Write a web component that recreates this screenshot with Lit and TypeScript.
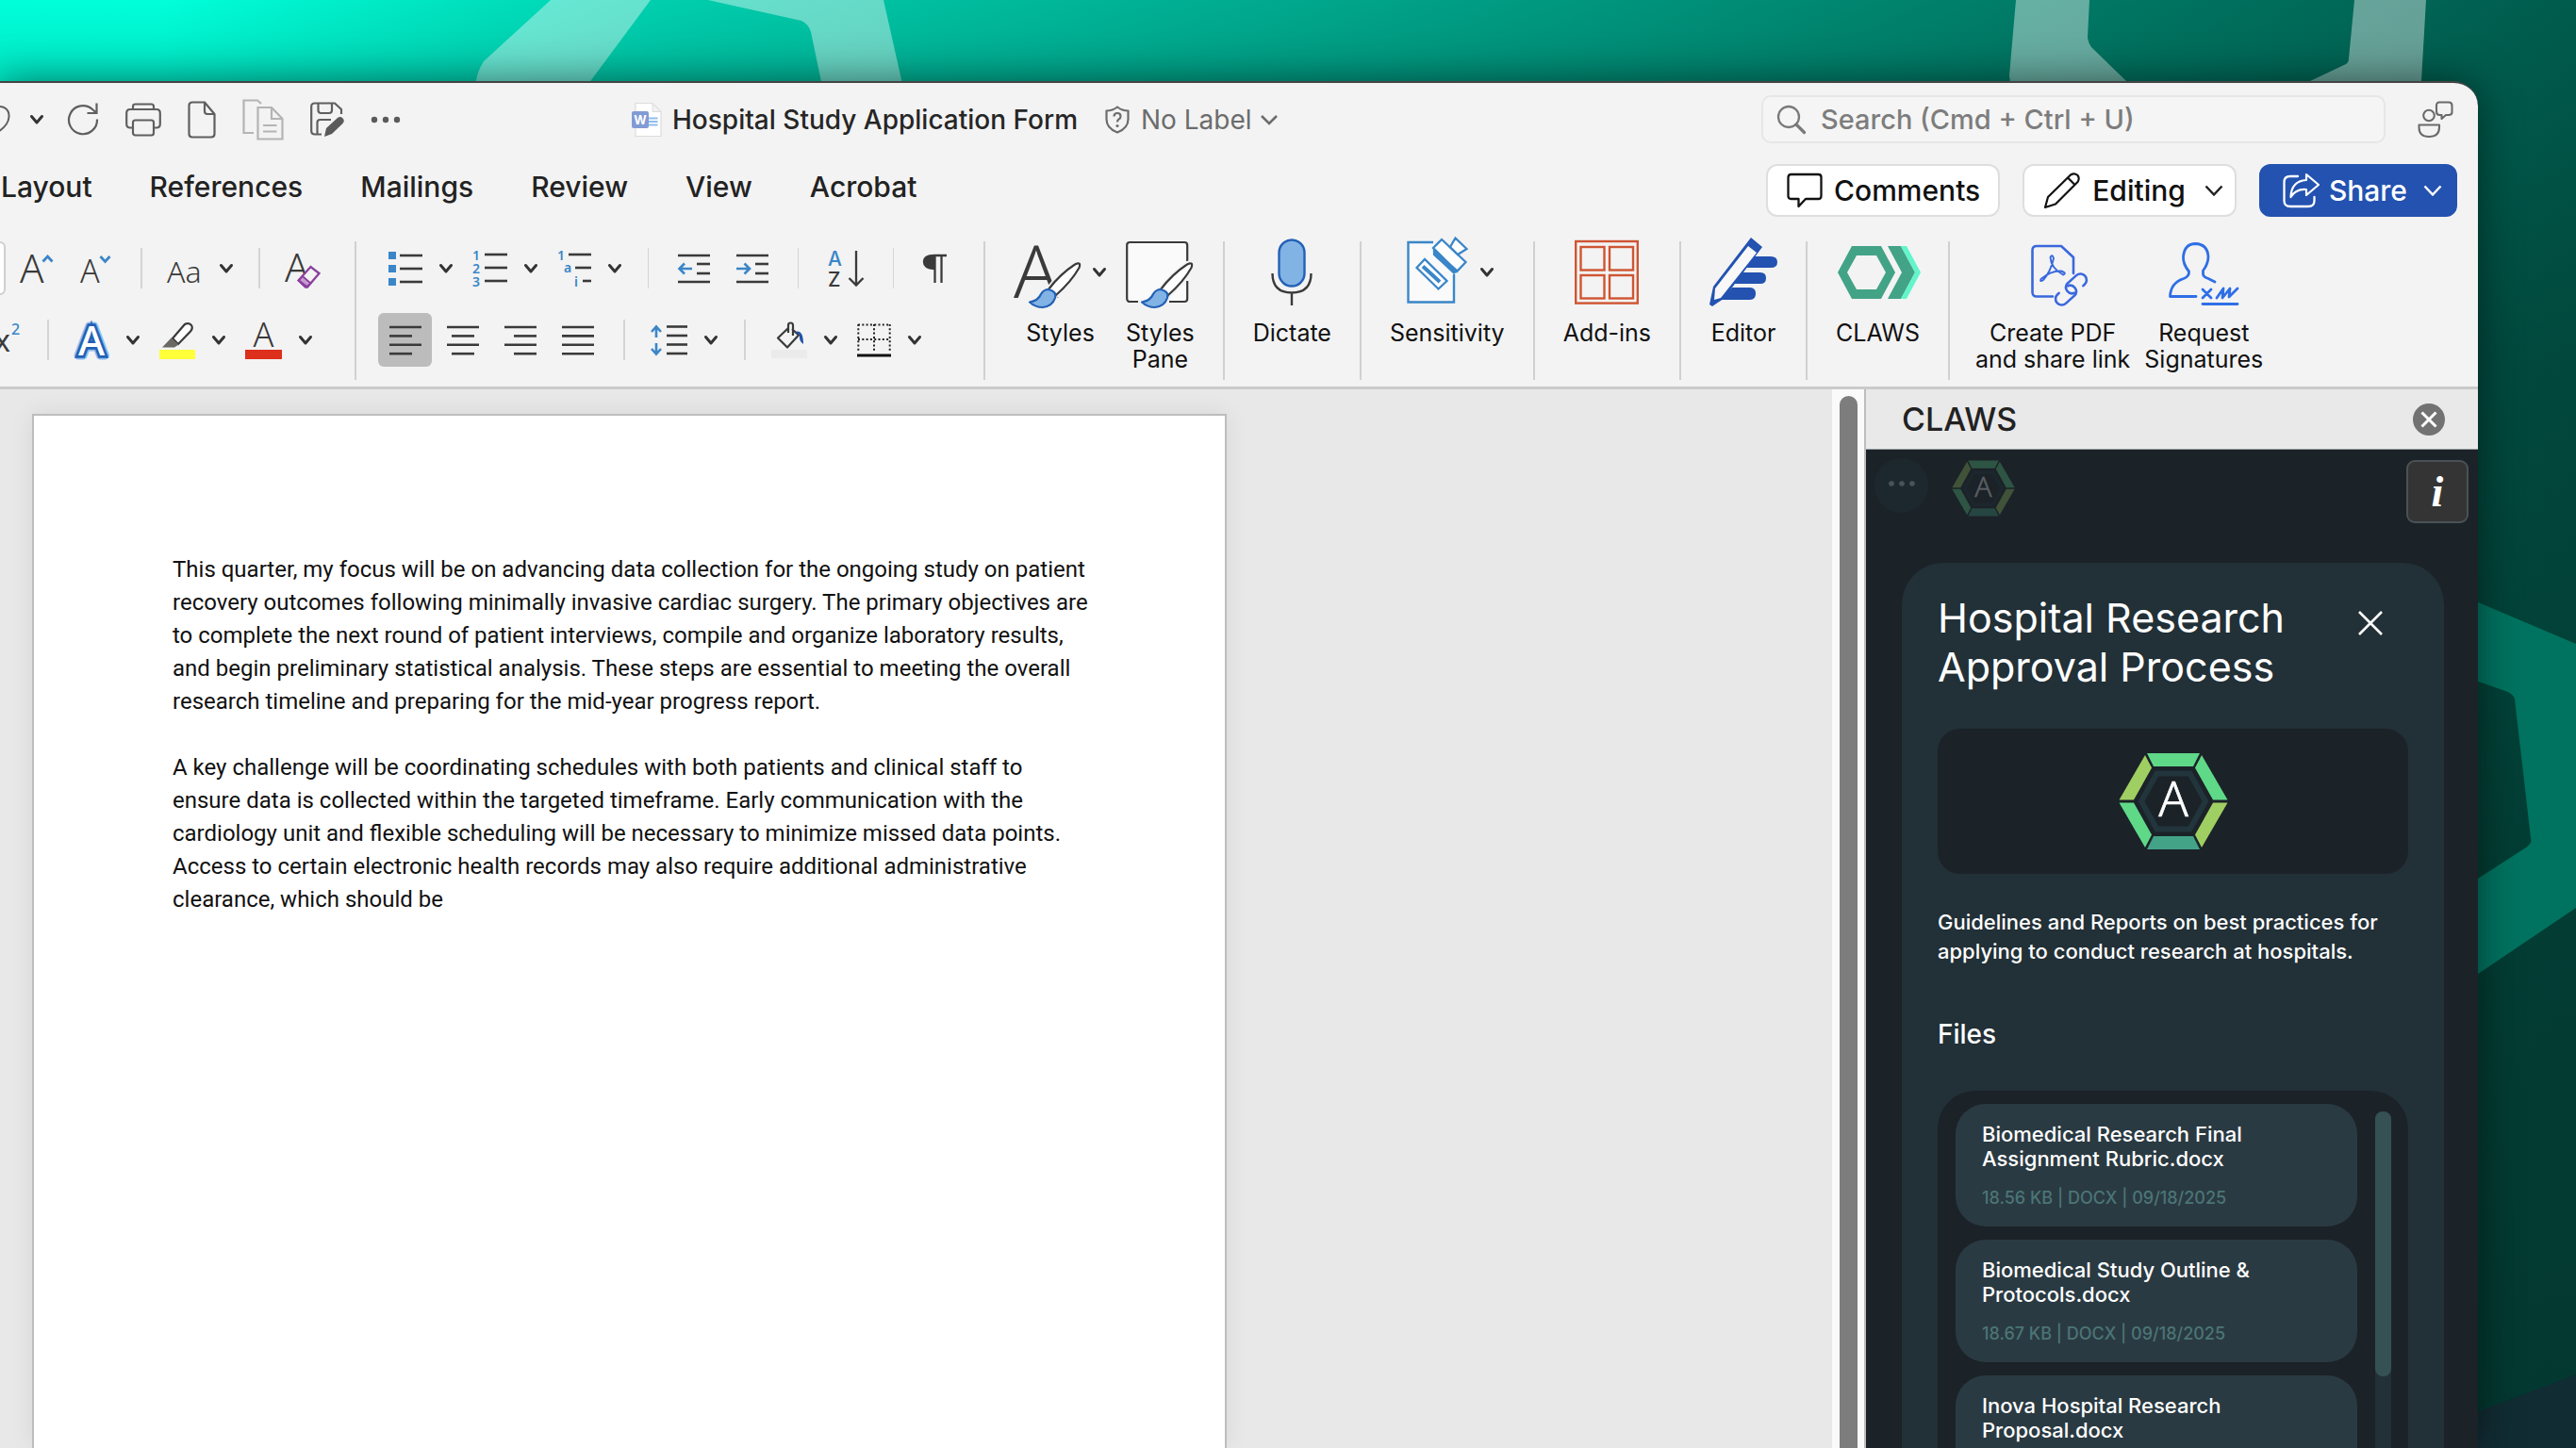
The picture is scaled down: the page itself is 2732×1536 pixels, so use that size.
import { LitElement, html, css, svg } from "lit";
import { customElement, property } from "lit/decorators.js";

const INK = "#3a3a3a";
const BLUE = "#3a86c8";
const DEEP = "#2352b0";

const pic = (w: number, h: number, body: unknown) => html`<svg
  class="pic"
  width=${w}
  height=${h}
  viewBox="0 0 ${w} ${h}"
  fill="none"
  aria-hidden="true"
>${body}</svg>`;

const chevron = (color = "#333", sw = 3) =>
  pic(16, 12, svg`<path d="M2.5 2.5 8 9l5.500-6.500" stroke=${color} stroke-width=${sw} stroke-linecap="round" stroke-linejoin="round"/>`);

const rule = (x1: number, x2: number, y: number) =>
  svg`<path d="M${x1} ${y}H${x2}" stroke=${INK} stroke-width="2.600"/>`;

/* Title bar */
const undo = pic(11, 40, svg`<path d="M-6 7C4 4 10 9 9.500 17C9 24 4 29-2 33" stroke="#5f5f5f" stroke-width="2"/>`);
const redo = pic(34, 38, svg`<path d="M32 18.500A15 15 0 1 1 27 8L31 11.500M31.500 1.500V12H21.500" stroke="#5f5f5f" stroke-width="2.200"/>`);
const printer = pic(38, 36, svg`<g stroke="#5f5f5f" stroke-width="2.200">
  <path d="M8 7V4Q8 1.500 10.500 1.500H27.500Q30 1.500 30 4V7"/>
  <path d="M8 26.500H5Q1.200 26.500 1.200 22.500V11Q1.200 7 5 7H33Q36.800 7 36.800 11V22.500Q36.800 26.500 33 26.500H30"/>
  <rect x="8" y="18.500" width="22" height="16" rx="2.500"/></g>`);
const newDoc = pic(30, 40, svg`<path d="M18 1.500H5Q1.500 1.500 1.500 5V35Q1.500 38.500 5 38.500H25Q28.500 38.500 28.500 35V14L18 1.500V11Q18 14 21 14H28.500" stroke="#5f5f5f" stroke-width="2.200" stroke-linejoin="round"/>`);
const copyDoc = pic(44, 44, svg`<path d="M12 36H1.500V1.500H16L20 5M16.500 9H31L42.500 21V42.500H16.500ZM31 9V21H42.500M22 28H36.500M22 34.500H36.500" stroke="#b4b4b4" stroke-width="2.200"/>`);
const saveEdit = pic(36, 38, svg`<g stroke="#5f5f5f" stroke-width="2.200" stroke-linejoin="round">
  <path d="M12 34.500H5Q1.200 34.500 1.200 31V5Q1.200 1.500 5 1.500H26L33 8V13"/>
  <path d="M8.500 1.500V9Q8.500 12 11.500 12H20Q23 12 23 9V1.500M7.500 34V22Q7.500 19 10.500 19H22"/></g>
  <path d="M15 37 17 28 29 17Q32 15 34.500 17.500Q37 20 34.500 23L23 34Z" fill="#5a5a5a"/>`);
const dots = pic(32, 10, svg`<g fill="#5a5a5a"><circle cx="4" cy="5" r="3.200"/><circle cx="16" cy="5" r="3.200"/><circle cx="28" cy="5" r="3.200"/></g>`);
const wordFile = pic(34, 40, svg`<path d="M5 2.500H23L32 11.500V37.500H5Z" fill="#fff" stroke="#dcdcdc" stroke-width="1.200"/>
  <path d="M23 2.500V11.500H32Z" fill="#f1f1f1" stroke="#dcdcdc"/>
  <path d="M19 18.500H28.500M19 22H28.500M19 25.500H28.500" stroke="#8fbdf0" stroke-width="1.800"/>
  <rect x="1" y="11" width="18" height="18" rx="2" fill="#819bd4"/>
  <text x="10" y="25" text-anchor="middle" font-family="Inter, sans-serif" font-size="13" font-weight="700" fill="#fff">W</text>`);
const shield = pic(26, 30, svg`<path d="M13 1.500Q18 5.500 24.500 5.500V14.500Q24.500 24 13 28.500Q1.500 24 1.500 14.500V5.500Q8 5.500 13 1.500Z" stroke="#6c6c6c" stroke-width="2.200" stroke-linejoin="round"/>
  <path d="M9.500 11.500Q9.500 8 13 8Q16.500 8 16.500 11.200Q16.500 13.500 14.500 14.500Q13 15.500 13 17.500" stroke="#6c6c6c" stroke-width="2.200"/><circle cx="13" cy="21.500" r="1.600" fill="#6c6c6c"/>`);
const magnifier = pic(32, 32, svg`<circle cx="13" cy="13" r="11" stroke="#7a7a7a" stroke-width="2.300"/><path d="M21 21 29.500 29.500" stroke="#7a7a7a" stroke-width="3.200" stroke-linecap="round"/>`);
const personChat = pic(38, 40, svg`<g stroke="#6a6a6a" stroke-width="2.100" stroke-linejoin="round">
  <circle cx="12" cy="15.500" r="5.800"/>
  <path d="M1.500 25.500H23V28Q23 38 12 38Q1.500 38 1.500 28Z"/>
  <path d="M23 1.500H33Q36.500 1.500 36.500 5V12Q36.500 15 33 15H30L25.500 19V15H23.500Q20 15 20 11.500V5Q20 1.500 23 1.500Z"/></g>`);

/* Action buttons */
const bubble = pic(38, 38, svg`<path d="M4.500 2H33.500Q36.500 2 36.500 5V25Q36.500 28 33.500 28H20L12.500 36V28H4.500Q1.500 28 1.500 25V5Q1.500 2 4.500 2Z" stroke="#111" stroke-width="2.300" stroke-linejoin="round"/>`);
const pencil = pic(40, 40, svg`<path d="M2 38 5 27 29 3.500Q33 1 36.500 4Q39 7.500 36.500 11L13 34.500ZM26 6.500 33.500 14" stroke="#111" stroke-width="2.200" stroke-linejoin="round"/>`);
const shareOut = pic(40, 38, svg`<path d="M16 4H8Q1.500 4 1.500 10V30Q1.500 36 8 36H27Q33.500 36 33.500 30V26" stroke="#fff" stroke-width="2.300" stroke-linecap="round"/>
  <path d="M25 2 38 13 25 24V18Q14 17 8.500 26Q9 9 25 8Z" stroke="#fff" stroke-width="2.200" stroke-linejoin="round"/>`);

/* Font group */
const glyphA = (x: number, y: number, size: number, weight = 400) =>
  svg`<text x=${x} y=${y} font-family="Noto Sans, sans-serif" font-size=${size} font-weight=${weight} fill="#3a3a3a">A</text>`;
const growFont = pic(36, 38, svg`${glyphA(0, 34, 42, 300)}<path d="M24.500 11.500 29.500 6 34.500 11.500" stroke=${BLUE} stroke-width="2.800"/>`);
const shrinkFont = pic(34, 38, svg`${glyphA(0, 34, 34, 300)}<path d="M21.500 6 26.500 11.500 31.500 6" stroke=${BLUE} stroke-width="2.800"/>`);
const changeCase = pic(38, 38, svg`<text x="0" y="34" font-family="Noto Sans, sans-serif" font-size="32" font-weight="300" fill="#3a3a3a">Aa</text>`);
const clearFormat = pic(38, 42, svg`${glyphA(0, 35, 42, 300)}<path d="M14.500 33.500 27.500 19 36.500 26 24 40.500H22Z" fill="#f3f3f3" stroke="#8a3f9c" stroke-width="2.300"/><path d="M15 33.500 19 29 27.500 36.500 23.500 40Z" fill="#c79bd0" stroke="#8a3f9c" stroke-width="1.800"/>`);
const superscript = pic(24, 42, svg`<text x="-6" y="33" font-family="Noto Sans, sans-serif" font-size="32" fill="#3a3a3a">x</text><text x="12" y="15" font-family="Noto Sans, sans-serif" font-size="16" font-weight="500" fill=${BLUE}>2</text>`);
const textEffects = pic(38, 38, svg`<text x="19" y="34.500" text-anchor="middle" font-family="Noto Sans, sans-serif" font-size="43" font-weight="500" fill="#fff" stroke="#8fbdf0" stroke-width="9" paint-order="stroke" stroke-linejoin="round">A</text><text x="19" y="34.500" text-anchor="middle" font-family="Noto Sans, sans-serif" font-size="43" font-weight="500" fill="#fff" stroke="#2361b5" stroke-width="5.500" paint-order="stroke">A</text>`);
const highlight = pic(38, 40, svg`<rect x="0" y="30" width="38" height="10" fill="#ffff3a"/><path d="M14 18 27 3Q31 1 34 4Q36 7 33 10.500L20 24Z" fill="#fff" stroke=${INK} stroke-width="2.200"/><path d="M12.500 17.500 20.500 24.500 16 27.500H3Z" fill="#6b6762"/>`);
const fontColor = pic(39, 40, svg`<rect x="0" y="30" width="39" height="10" fill="#dc2f1c"/><text x="19.500" y="27" text-anchor="middle" font-family="Noto Sans, sans-serif" font-size="36" font-weight="300" fill="#3a3a3a">A</text>`);

/* Paragraph group */
const bullets = pic(36, 38, svg`<g fill=${BLUE}><rect width="8" height="8" y="1"/><rect width="8" height="8" y="15"/><rect width="8" height="8" y="29"/></g>${rule(12, 36, 5)}${rule(12, 36, 19)}${rule(12, 36, 33)}`);
const mark = (x: number, y: number, t: string) => svg`<text x=${x} y=${y} font-family="Noto Sans, sans-serif" font-size="14" font-weight="600" fill=${BLUE}>${t}</text>`;
const numbers = pic(37, 40, svg`${mark(0, 11, "1")}${mark(0, 25, "2")}${mark(0, 39, "3")}${rule(13, 37, 5)}${rule(13, 37, 19)}${rule(13, 37, 33)}`);
const multilevel = pic(36, 40, svg`${mark(0, 11, "1")}${mark(7, 24, "a")}${mark(18, 39, "i")}${rule(12, 36, 5)}${rule(19, 36, 19)}${rule(27, 36, 33)}`);
const outdent = pic(34, 32, svg`${rule(0, 34, 2)}${rule(20, 34, 11)}${rule(20, 34, 21)}${rule(0, 34, 30)}<path d="M15 16H2M7 10.500 1.500 16 7 21.500" stroke=${BLUE} stroke-width="2.600"/>`);
const indent = pic(34, 32, svg`${rule(0, 34, 2)}${rule(20, 34, 11)}${rule(20, 34, 21)}${rule(0, 34, 30)}<path d="M0 16H13.500M8.500 10.500 14 16 8.500 21.500" stroke=${BLUE} stroke-width="2.600"/>`);
const sortAz = pic(38, 42, svg`<text x="0" y="18" font-family="Inter, sans-serif" font-size="21" font-weight="500" fill=${BLUE}>A</text><text x="0" y="40" font-family="Inter, sans-serif" font-size="21" font-weight="500" fill="#3a3a3a">Z</text><path d="M30 2V38M22.500 31 30 38.500 37.500 31" stroke=${INK} stroke-width="2.300"/>`);
const pilcrow = pic(26, 32, svg`<path d="M12 16Q1 15.500 1 9Q1 2 12 2H25M12.500 2V31M19.500 2V31" stroke=${INK} stroke-width="2.300"/><path d="M12 2Q1 2 1 9.500Q1 16.500 12 16.500Z" fill=${INK}/>`);
const lines = (rows: number[][]) => pic(34, 32, svg`${rows.map((r, i) => rule(r[0], r[1], 2 + i * 9.4))}`);
const alignLeft = lines([[0, 34], [0, 24], [0, 34], [0, 24]]);
const alignCenter = lines([[0, 34], [5, 29], [0, 34], [5, 29]]);
const alignRight = lines([[0, 34], [10, 34], [0, 34], [10, 34]]);
const justify = lines([[0, 34], [0, 34], [0, 34], [0, 34]]);
const lineSpacing = pic(39, 34, svg`${rule(17, 39, 2.5)}${rule(17, 39, 12)}${rule(17, 39, 21.5)}${rule(17, 39, 31)}<path d="M6 14V2.500M1 8 6 2.500 11 8M6 20V31.500M1 26 6 31.500 11 26" stroke=${BLUE} stroke-width="2.600"/>`);
const shading = pic(38, 40, svg`<rect y="30" width="38" height="9" fill="#ebebeb"/><path d="M18 7 7 17.500 17 27.500 29 14.500 22 8M18 12V4Q18 1.500 20.500 1.500Q23 1.500 23 4V15" stroke=${INK} stroke-width="2.200" stroke-linejoin="round"/><path d="M25 11Q34 8 34 24Q29 21 30 14Z" fill=${DEEP}/>`);
const borders = pic(36, 36, svg`<path d="M1.300 1V31M34.700 1V31M18 1V31M1 1.500H35M1 17H35" stroke="#222" stroke-width="2" stroke-dasharray="2 2.300"/><path d="M0 34H36" stroke="#111" stroke-width="3"/>`);

/* Large ribbon buttons */
const brush = svg`<g transform="translate(21 0)">
  <path d="M16 54Q28 38 44 27.500Q51 24 48.500 31Q40 46 24 60Z" fill="none" stroke="#f3f3f3" stroke-width="6"/>
  <path d="M16 54Q28 38 44 27.500Q51 24 48.500 31Q40 46 24 60Z" fill="#fff" stroke=${INK} stroke-width="2.200"/>
  <path d="M-4 67.500Q5 66 8 59Q11 54 16 54Q25 56 23 63Q20 72 10 73Q2 73-4 67.500Z" fill="#82b3e5" stroke="#2361b5" stroke-width="2.200" stroke-linejoin="round"/></g>`;
const styles = pic(72, 72, svg`<text x="0" y="63" font-family="Noto Sans, sans-serif" font-size="78" font-weight="300" fill="#3a3a3a">A</text>${brush}`);
const stylesPane = pic(72, 72, svg`<rect x="1.200" y="4" width="64" height="63" rx="3" fill="#fafafa" stroke=${INK} stroke-width="2.200"/><path d="M13 67H46M65.200 24V45" stroke="#f3f3f3" stroke-width="5"/>${brush}`);
const mic = pic(44, 72, svg`<rect x="8.500" y="1.500" width="27" height="49" rx="13.500" fill="#82b3e5" stroke="#2361b5" stroke-width="2.400"/><path d="M1.500 37Q1.500 57.500 22 57.500Q42.500 57.500 42.500 37M22 57.500V71" stroke=${INK} stroke-width="2.400"/>`);
const sensitivity = pic(74, 72, svg`<g transform="translate(8 0)"><path d="M28 4H1.500V67.500H50V38" fill="#fafafa" stroke=${BLUE} stroke-width="2.400"/>
  <g stroke=${BLUE} stroke-width="2.300">
    <path d="M10.500 31 19 22 42.500 45 33.500 53.500Z" fill="#fff"/><path d="M17 29.500 35 46" stroke-width="4"/>
    <path d="M28 10 37 1 62.500 25 53 35Z" fill="#fff"/><path d="M29 13 53 34 50 36.500 29 17Z" fill=${BLUE}/>
    <path d="M46 9 51.500-.500 63.500 11 54 17Z" fill="#fff"/></g></g>`);
const addins = pic(68, 70, svg`<g stroke="#cf5532" stroke-width="2.400"><rect x="1.200" y="2" width="65.600" height="65.600"/><rect x="6.500" y="8" width="25" height="24.500"/><rect x="37" y="8" width="25" height="24.500"/><rect x="6.500" y="38" width="25" height="24.500"/><rect x="37" y="38" width="25" height="24.500"/></g>`);
const editor = pic(72, 74, svg`<g fill=${DEEP}><path d="M40 20H65Q72 20 72 26T65 32H34Z"/><path d="M33 37H54Q60 37 60 43T54 49H26Z"/><path d="M24 53H43Q49 53 49 59.500T43 66H12Z"/><path d="M0 71 4 52 44 0 56 10 15 65Q10 68 3 73Z"/></g><path d="M41 9 50 16 12 64 5 66 6 54Z" fill="#f8f8f8"/>`);
const claws = pic(88, 60, svg`<path d="M16 2H47L62 30 47 58H16L1 30ZM21 12 11 30 21 48H42L52 30 42 12Z" fill="#43a386" fill-rule="evenodd"/><path d="M54 2H68L83 30 68 58H54L69 30Z" fill="#43a386"/><path d="M68 2H74L89 30 74 58H68L83 30Z" fill="#62f5cb"/>`);
const createPdf = pic(48, 68, svg`<g stroke="#3a68dd" stroke-width="2.600" stroke-linecap="round">
  <path d="M24 59.500H7Q2.500 59.500 2.500 55V10.500Q2.500 6 7 6H33L46 18V35" stroke-linejoin="round"/>
  <path d="M11.500 41Q10 44.500 14 42Q22 33 25 19Q23.500 14 21.500 18Q22 29 35 36.500Q39.500 35 33 32.500Q22 32 11.500 41Z" stroke-width="1.900"/>
  <path transform="translate(49 46) rotate(-42)" d="M4 6.500H6A6.500 6.500 0 0 0 6-6.500H-7A6.500 6.500 0 0 0-8 6"/>
  <path transform="translate(38 58) rotate(-42)" d="M-4-6.500H-6A6.500 6.500 0 0 0-6 6.500H7A6.500 6.500 0 0 0 8-6"/></g>`);
const signatures = pic(74, 70, svg`<g stroke="#2f6fe6" stroke-width="2.800" stroke-linecap="round" stroke-linejoin="round">
  <path d="M29 60.500H1.500Q2 46 16 41.500Q22 39 21.500 34Q15 26 15.500 18Q17 4.500 28.500 4.500Q41 5 42 18Q42 26 36.500 33V37Q37 40 42 41.500L49 45"/>
  <path d="M36 53 45 62M45 53 36 62M51 62 58 52 57 62 65 52 64 61 73 52M36 68.500H73"/></g>`);

/* Assistant badge: six coloured bars around the letter A */
const badge = (w: number, h: number) => html`<svg class="pic" width=${w} height=${h} viewBox="0 0 116 104" aria-hidden="true">
  <path d="M30 1H86L79 15H37Z" fill="#5fd988"/>
  <path d="M88 3 115.500 50.500H100L81 16.500Z" fill="#5fd988"/>
  <path d="M115.500 53.500 88 101 81 87.500 100 53.500Z" fill="#9fcf62"/>
  <path d="M86 103H30L37 89H79Z" fill="#43a386"/>
  <path d="M28 101 .5 53.500H16L35 87.500Z" fill="#5fd988"/>
  <path d="M.5 50.500 28 3 35 16.500 16 50.500Z" fill="#9fcf62"/>
  <path d="M40.500 22.500H75.500L92 52 75.500 81.500H40.500L24 52Z" fill="none" stroke="#22343c" stroke-width="6"/>
  <text x="58" y="67.500" text-anchor="middle" font-family="Noto Sans, sans-serif" font-size="52" font-weight="300" fill="#fff" stroke="#fff" stroke-width="0.600">A</text>
</svg>`;

const shared = css`
  * { box-sizing: border-box; }
  button { font: inherit; color: inherit; background: none; border: 0; margin: 0; padding: 0; cursor: pointer; }
  .pic { display: block; flex: none; overflow: visible; }
`;

@customElement("title-bar")
class TitleBar extends LitElement {
  static styles = [shared, css`
    :host { display: flex; align-items: center; height: 77px; padding-right: 26px; font-size: 28px; color: #262626; }
    .quick { display: flex; align-items: center; gap: 28px; }
    .quick button, .label { display: flex; align-items: center; }
    .quick .undo { gap: 20px; margin-right: -4px; }
    .name { display: flex; align-items: center; gap: 10px; margin: 0 0 0 244px; font-size: inherit; font-weight: 500; white-space: nowrap; }
    .label { gap: 12px; margin-left: 29px; color: #6c6c6c; white-space: nowrap; }
    .label .text { margin-right: -4px; }
    .search { display: flex; align-items: center; gap: 15px; width: 662px; height: 51px; margin: 0 34px 0 auto; padding: 0 14px; border: 2px solid #e6e6e6; border-radius: 10px; background: #f5f5f5; }
    .search input { flex: 1; min-width: 0; border: 0; outline: 0; background: none; font: inherit; font-size: 29px; font-weight: 500; padding: 0; }
    .search input::placeholder { color: #7d7d7d; opacity: 1; }
  `];
  render() {
    return html`
      <div class="quick">
        <button class="undo" aria-label="Undo">${undo}${chevron()}</button>
        <button aria-label="Redo">${redo}</button>
        <button aria-label="Print">${printer}</button>
        <button aria-label="New document">${newDoc}</button>
        <button aria-label="Copy document">${copyDoc}</button>
        <button aria-label="Save and edit">${saveEdit}</button>
        <button aria-label="More commands">${dots}</button>
      </div>
      <h1 class="name">${wordFile}<span>Hospital Study Application Form</span></h1>
      <button class="label">${shield}<span class="text">No Label</span>${pic(20, 12, svg`<path d="M2 2 10 10 18 2" stroke="#6c6c6c" stroke-width="2.600"/>`)}</button>
      <label class="search">${magnifier}<input type="search" aria-label="Search" placeholder="Search (Cmd + Ctrl + U)" /></label>
      <button aria-label="Presence">${personChat}</button>`;
  }
}

@customElement("tab-row")
class TabRow extends LitElement {
  static styles = [shared, css`
    :host { display: flex; justify-content: space-between; align-items: center; margin-top: 9px; padding-right: 22px; font-size: 30px; }
    nav { display: flex; gap: 61px; padding: 0 0 8px 1px; font-weight: 500; }
    nav a { color: #222; text-decoration: none; }
    .actions { display: flex; gap: 24px; color: #111; font-weight: 500; }
    .actions button { display: flex; align-items: center; gap: 12px; height: 56px; padding: 0 19px 0 20px; border: 2px solid #dedede; border-radius: 12px; background: #fff; }
    .actions .more { padding-right: 12px; }
    .actions .share { gap: 9px; padding: 0 14px 0 23px; border-color: #2352b0; background: #2352b0; color: #fff; }
    .drop { margin-left: 8px; }
  `];
  private drop(color: string) {
    return html`<span class="drop">${pic(20, 14, svg`<path d="M1.500 2.500 10 11.500 18.500 2.500" stroke=${color} stroke-width="2.500"/>`)}</span>`;
  }
  render() {
    return html`
      <nav>${["Layout", "References", "Mailings", "Review", "View", "Acrobat"].map((t) => html`<a href="#">${t}</a>`)}</nav>
      <div class="actions">
        <button>${bubble}Comments</button>
        <button class="more">${pencil}Editing${this.drop("#222")}</button>
        <button class="share">${shareOut}Share${this.drop("#fff")}</button>
      </div>`;
  }
}

@customElement("ribbon-bar")
class RibbonBar extends LitElement {
  static styles = [shared, css`
    :host { display: flex; margin-top: 26px; padding-bottom: 7px; border-bottom: 3px solid #cacaca; font-size: 25px; line-height: 28px; color: #111; }
    .group { display: flex; gap: 20px; padding: 0 30px; border-right: 2px solid #d0d0d0; height: 147px; }
    .small { flex-direction: column; gap: 19px; }
    .font { padding: 0 27px 0 0; width: 378px; }
    .para { padding: 0 34px; width: 667px; }
    .pdf { border: 0; padding: 0 27px; gap: 15px; }
    .row { display: flex; align-items: center; gap: 20px; height: 57px; }
    .row button { display: flex; align-items: center; gap: 17px; }
    .row .plain { padding: 0 4px; }
    .size { width: 6px; height: 57px; margin-right: -9px; border: 2px solid #cfcfcf; border-left: 0; border-radius: 0 8px 8px 0; background: #fff; }
    .sep { width: 2px; height: 43px; margin: 0 6px; background: #d4d4d4; }
    .para .sep { margin: 0 7px; }
    .aligns { display: flex; gap: 4px; margin-left: -11px; margin-right: -7px; }
    .aligns button { justify-content: center; width: 57px; height: 57px; border-radius: 6px; }
    .aligns .on { background: #bcbcbc; }
    .big { display: flex; flex-direction: column; align-items: center; margin-top: -3px; white-space: nowrap; }
    .icon { display: flex; align-items: center; justify-content: center; gap: 11px; height: 72px; margin-bottom: 14px; }
  `];
  private combo(label: string, icon: unknown) {
    return html`<button aria-label=${label}>${icon}${chevron()}</button>`;
  }
  private plain(label: string, icon: unknown) {
    return html`<button class="plain" aria-label=${label}>${icon}</button>`;
  }
  private big(text: string[], icon: unknown, drop = false) {
    return html`<button class="big"><span class="icon">${icon}${drop ? chevron() : ""}</span>${text.map((t) => html`<span>${t}</span>`)}</button>`;
  }
  render() {
    const sep = html`<span class="sep"></span>`;
    return html`
      <div class="group small font">
        <div class="row"><span class="size"></span>${this.plain("Increase font size", growFont)}${this.plain("Decrease font size", shrinkFont)}${sep}${this.combo("Change case", changeCase)}${sep}<button aria-label="Clear formatting">${clearFormat}</button></div>
        <div class="row"><button aria-label="Superscript">${superscript}</button>${sep}${this.combo("Text effects", textEffects)}${this.combo("Highlight", highlight)}${this.combo("Font colour", fontColor)}</div>
      </div>
      <div class="group small para">
        <div class="row">${this.combo("Bullets", bullets)}${this.combo("Numbering", numbers)}${this.combo("Multilevel list", multilevel)}${sep}${this.plain("Decrease indent", outdent)}${this.plain("Increase indent", indent)}${sep}${this.plain("Sort", sortAz)}${sep}${this.plain("Show paragraph marks", pilcrow)}</div>
        <div class="row">
          <div class="aligns"><button class="on" aria-label="Align left">${alignLeft}</button><button aria-label="Centre">${alignCenter}</button><button aria-label="Align right">${alignRight}</button><button aria-label="Justify">${justify}</button></div>
          ${sep}${this.combo("Line spacing", lineSpacing)}${sep}${this.combo("Shading", shading)}${this.combo("Borders", borders)}
        </div>
      </div>
      <div class="group">${this.big(["Styles"], styles, true)}${this.big(["Styles", "Pane"], stylesPane)}</div>
      <div class="group">${this.big(["Dictate"], mic)}</div>
      <div class="group">${this.big(["Sensitivity"], sensitivity, true)}</div>
      <div class="group">${this.big(["Add-ins"], addins)}</div>
      <div class="group">${this.big(["Editor"], editor)}</div>
      <div class="group">${this.big(["CLAWS"], claws)}</div>
      <div class="group pdf">${this.big(["Create PDF", "and share link"], createPdf)}${this.big(["Request", "Signatures"], signatures)}</div>`;
  }
}

@customElement("document-page")
class DocumentPage extends LitElement {
  static styles = [shared, css`
    :host { display: flex; flex: 1; min-width: 0; background: #e8e8e8; overflow: hidden; }
    .canvas { flex: 1; padding: 26px 0 0 34px; }
    .page { width: 1267px; height: 100%; padding: 146px 120px 0 147px; background: #fff; border: 2px solid #bdbdbd; border-bottom: 0; box-shadow: 0 0 24px rgba(0, 0, 0, 0.08); font-family: Roboto, sans-serif; font-size: 24px; line-height: 35px; color: #111; }
    p { margin: 0 0 35px; white-space: nowrap; }
    p span { display: block; }
    .gutter { width: 34px; padding: 7px 7px 0 8px; background: #fafafa; }
    .thumb { height: 100%; border-radius: 10px 10px 0 0; background: #7d7d7d; }
  `];
  private paragraphs = [
    [
      "This quarter, my focus will be on advancing data collection for the ongoing study on patient",
      "recovery outcomes following minimally invasive cardiac surgery. The primary objectives are",
      "to complete the next round of patient interviews, compile and organize laboratory results,",
      "and begin preliminary statistical analysis. These steps are essential to meeting the overall",
      "research timeline and preparing for the mid-year progress report.",
    ],
    [
      "A key challenge will be coordinating schedules with both patients and clinical staff to",
      "ensure data is collected within the targeted timeframe. Early communication with the",
      "cardiology unit and flexible scheduling will be necessary to minimize missed data points.",
      "Access to certain electronic health records may also require additional administrative",
      "clearance, which should be",
    ],
  ];
  render() {
    return html`
      <div class="canvas"><article class="page">${this.paragraphs.map((p) => html`<p>${p.map((l) => html`<span>${l} </span>`)}</p>`)}</article></div>
      <div class="gutter"><div class="thumb"></div></div>`;
  }
}

@customElement("file-card")
class FileCard extends LitElement {
  @property({ attribute: false }) lines: string[] = [];
  @property() meta = "";
  static styles = [shared, css`
    :host { display: block; }
    button { display: flex; flex-direction: column; width: 100%; height: 130px; padding: 19px 28px 0; border-radius: 32px; background: #2a3a42; text-align: left; color: #fff; font-size: 22px; line-height: 26px; font-weight: 500; white-space: nowrap; }
    .meta { margin-top: 17px; color: #4b7576; font-size: 18px; line-height: 24px; }
  `];
  render() {
    return html`<button>${this.lines.map((t) => html`<span>${t}</span>`)}<span class="meta">${this.meta}</span></button>`;
  }
}

@customElement("claws-pane")
class ClawsPane extends LitElement {
  static styles = [shared, css`
    :host { display: flex; flex-direction: column; width: 651px; border-left: 2px solid #bdbdbd; background: #1b2228; color: #fff; overflow: hidden; }
    header { display: flex; flex: none; align-items: center; justify-content: space-between; height: 64px; padding: 0 35px 0 38px; background: #e9e9e9; border-bottom: 1px solid #9ba1a3; color: #222; }
    h2 { margin: 0; font-size: 34px; font-weight: 500; line-height: 40px; }
    .tools { display: flex; flex: none; align-items: flex-start; height: 120px; padding: 9px 10px 0 9px; }
    .menu { display: flex; align-items: center; justify-content: center; width: 57px; height: 58px; border-radius: 28px; background: #1d282e; }
    .brand { margin: 2px 0 0 25px; opacity: 0.28; }
    .info { display: flex; align-items: center; justify-content: center; width: 66px; height: 67px; margin: 2px 0 0 auto; border: 2px solid #4a5256; border-radius: 9px; background: #343434; font-family: "Liberation Serif", serif; font-style: italic; font-weight: 700; font-size: 46px; line-height: 46px; }
    .card { flex: 1; margin: 0 36px 0 38px; padding: 32px 38px 0; border-radius: 44px 44px 0 0; background: #223037; min-height: 0; }
    .head { display: flex; justify-content: space-between; }
    .head h3 { margin: 0; font-size: 43px; line-height: 52px; font-weight: 400; white-space: nowrap; }
    .head button { align-self: flex-start; margin: 18px 26px 0 0; }
    .logo { display: flex; align-items: center; justify-content: center; height: 154px; margin-top: 40px; border-radius: 24px; background: #1b2228; }
    p { margin: 36px 0 0; font-size: 22px; line-height: 31px; font-weight: 500; white-space: nowrap; }
    p span { display: block; }
    h4 { margin: 54px 0 0; font-size: 28px; line-height: 36px; font-weight: 500; }
    .files { display: flex; gap: 19px; margin-top: 42px; padding: 14px 18px 0 19px; border-radius: 40px 40px 0 0; background: #1b2228; }
    .list { display: flex; flex: 1; flex-direction: column; gap: 14px; margin: 0; padding: 0; list-style: none; }
    .track { width: 17px; margin-top: 8px; border-radius: 8px; background: #223037; }
    .bar { height: 281px; border-radius: 8px; background: #355153; }
  `];
  private files = [
    { name: ["Biomedical Research Final", "Assignment Rubric.docx"], meta: "18.56 KB | DOCX | 09/18/2025" },
    { name: ["Biomedical Study Outline &", "Protocols.docx"], meta: "18.67 KB | DOCX | 09/18/2025" },
    { name: ["Inova Hospital Research", "Proposal.docx"], meta: "" },
  ];
  render() {
    return html`
      <header><h2>CLAWS</h2><button aria-label="Close pane">${pic(34, 34, svg`<circle cx="17" cy="17" r="17" fill="#727272"/><path d="M9.500 9.500 24.500 24.500M24.500 9.500 9.500 24.500" stroke="#fff" stroke-width="3"/>`)}</button></header>
      <div class="tools">
        <button class="menu" aria-label="Menu">${pic(28, 12, svg`<g fill="#48545a"><circle cx="3" cy="4" r="2.800"/><circle cx="14" cy="4" r="2.800"/><circle cx="25" cy="4" r="2.800"/></g>`)}</button>
        <span class="brand">${badge(67, 60)}</span>
        <button class="info" aria-label="Information">i</button>
      </div>
      <section class="card">
        <div class="head">
          <h3>Hospital Research<br />Approval Process</h3>
          <button aria-label="Close">${pic(28, 28, svg`<path d="M2 2 26 26M26 2 2 26" stroke="#fff" stroke-width="2.600"/>`)}</button>
        </div>
        <div class="logo">${badge(116, 104)}</div>
        <p><span>Guidelines and Reports on best practices for </span><span>applying to conduct research at hospitals.</span></p>
        <h4>Files</h4>
        <div class="files">
          <ul class="list">${this.files.map((f) => html`<li><file-card .lines=${f.name} .meta=${f.meta}></file-card></li>`)}</ul>
          <div class="track"><div class="bar"></div></div>
        </div>
      </section>`;
  }
}

@customElement("app-root")
class AppRoot extends LitElement {
  static styles = [shared, css`
    :host { position: relative; display: flex; height: 100vh; padding: 86px 104px 0 0; overflow: hidden; box-sizing: border-box; font-family: Inter, sans-serif;
      background: linear-gradient(180deg, rgba(3, 56, 48, 0) 0, rgba(3, 56, 48, 0.55) 25%, rgba(3, 56, 48, 0.85) 60%, rgba(3, 56, 48, 1) 100%), linear-gradient(96deg, #00ffd9 0, #00ffd9 6%, #00cfae 24%, #00a78c 48%, #007a66 75%, #005f50 92%, #005446 100%); }
    .shapes { position: absolute; top: 0; left: 0; width: 100%; height: 100%; }
    .window { position: relative; display: flex; flex: 1; flex-direction: column; min-width: 0; }
    .window { border-top: 2px solid #444; border-radius: 0 26px 0 0; background: #f3f3f3; box-shadow: 0 0 44px rgba(0, 0, 0, 0.5); overflow: hidden; }
    .body { display: flex; flex: 1; min-height: 0; }
  `];
  render() {
    return html`
      <svg class="shapes" viewBox="0 0 2732 1536" preserveAspectRatio="none" aria-hidden="true">
        <g fill="#fff" fill-opacity="0.400">
          <path d="M584 0H690L601 120H505V86Q506 76 513 65Z"/>
          <path d="M751 0 850 22Q858 26 860 34L878 120H964L937 0Z"/>
          <path d="M2138 0H2216L2214 40Q2215 46 2218 50L2290 120H2136L2131 80Z"/>
          <path d="M2497 0H2573L2566 120H2430L2450 86 2488 68Q2491 66 2491 62Z"/>
        </g>
        <path d="M2600 627 2732 683V963L2600 1052ZM2600 713V950L2679 899Q2686 894 2684 889L2667 742Q2666 737 2660 734Z" fill="#007360" fill-rule="evenodd"/>
        <path d="M2600 1508 2732 1458V1536H2600Z" fill="#112c33"/>
      </svg>
      <main class="window">
        <title-bar></title-bar>
        <tab-row></tab-row>
        <ribbon-bar></ribbon-bar>
        <div class="body"><document-page></document-page><claws-pane></claws-pane></div>
      </main>`;
  }
}
